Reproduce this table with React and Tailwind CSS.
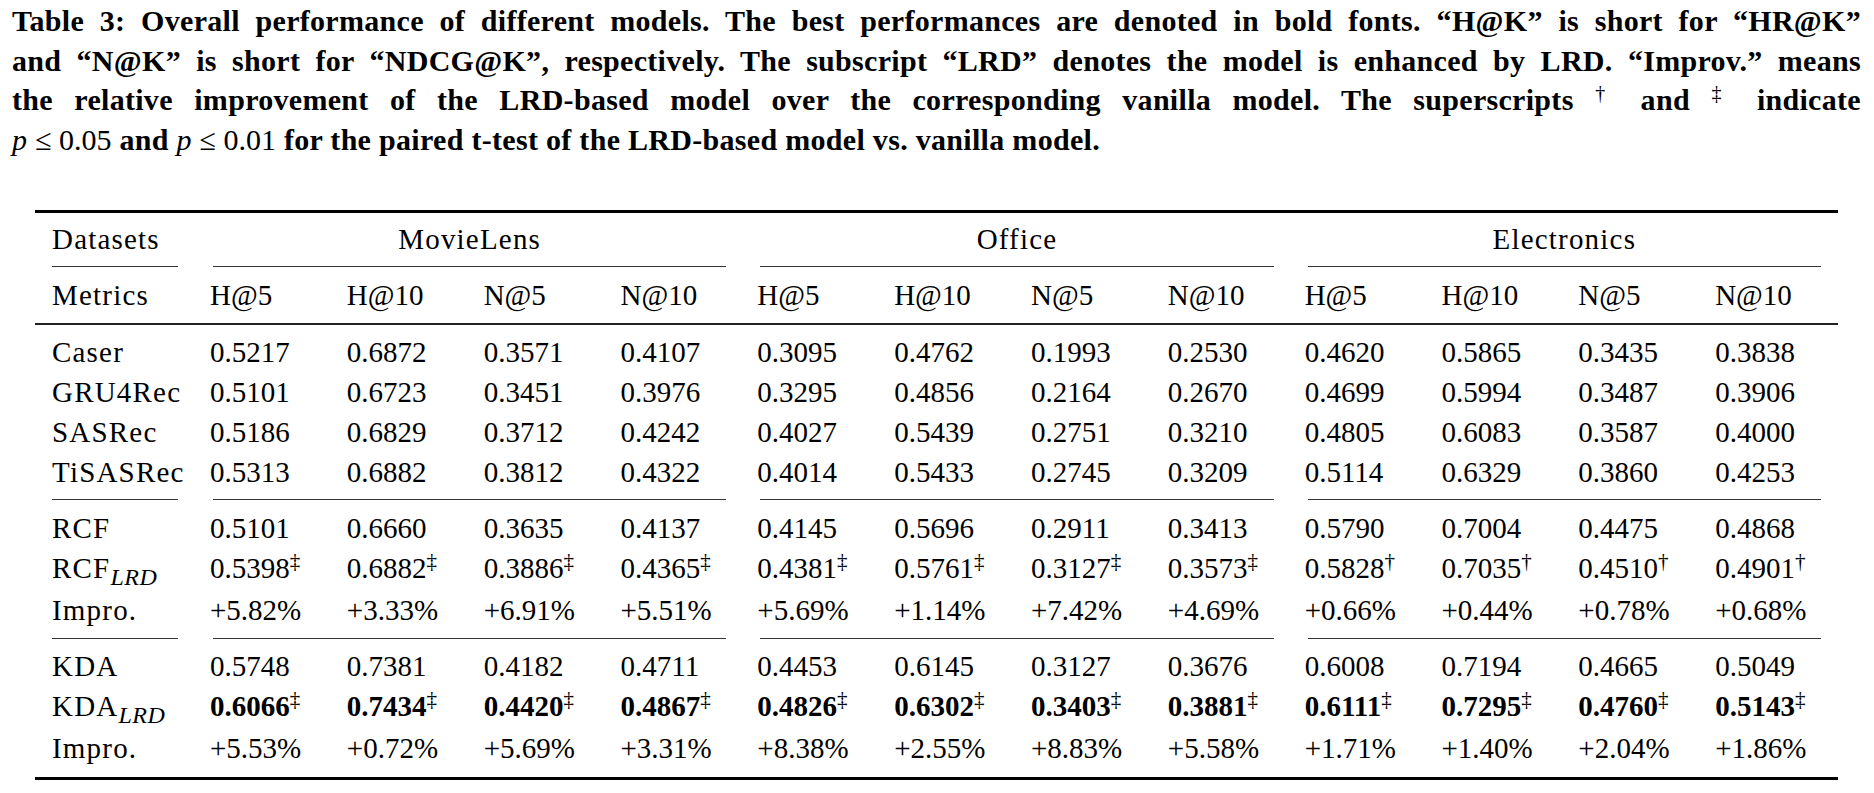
import React from "react";

const groups = ["MovieLens", "Office", "Electronics"];
const metrics = ["H@5", "H@10", "N@5", "N@10"];

// "‡" / "†" at the end of a value is drawn as a superscript
const block1 = [
  ["Caser", null, "0.5217 0.6872 0.3571 0.4107 0.3095 0.4762 0.1993 0.2530 0.4620 0.5865 0.3435 0.3838"],
  ["GRU4Rec", null, "0.5101 0.6723 0.3451 0.3976 0.3295 0.4856 0.2164 0.2670 0.4699 0.5994 0.3487 0.3906"],
  ["SASRec", null, "0.5186 0.6829 0.3712 0.4242 0.4027 0.5439 0.2751 0.3210 0.4805 0.6083 0.3587 0.4000"],
  ["TiSASRec", null, "0.5313 0.6882 0.3812 0.4322 0.4014 0.5433 0.2745 0.3209 0.5114 0.6329 0.3860 0.4253"],
];

const block2 = [
  ["RCF", null, "0.5101 0.6660 0.3635 0.4137 0.4145 0.5696 0.2911 0.3413 0.5790 0.7004 0.4475 0.4868"],
  ["RCF", "LRD", "0.5398‡ 0.6882‡ 0.3886‡ 0.4365‡ 0.4381‡ 0.5761‡ 0.3127‡ 0.3573‡ 0.5828† 0.7035† 0.4510† 0.4901†"],
  ["Impro.", null, "+5.82% +3.33% +6.91% +5.51% +5.69% +1.14% +7.42% +4.69% +0.66% +0.44% +0.78% +0.68%"],
];

const block3 = [
  ["KDA", null, "0.5748 0.7381 0.4182 0.4711 0.4453 0.6145 0.3127 0.3676 0.6008 0.7194 0.4665 0.5049"],
  ["KDA", "LRD", "0.6066‡ 0.7434‡ 0.4420‡ 0.4867‡ 0.4826‡ 0.6302‡ 0.3403‡ 0.3881‡ 0.6111‡ 0.7295‡ 0.4760‡ 0.5143‡", true],
  ["Impro.", null, "+5.53% +0.72% +5.69% +3.31% +8.38% +2.55% +8.83% +5.58% +1.71% +1.40% +2.04% +1.86%"],
];

const gridCols = "grid grid-cols-[161px_repeat(12,minmax(0,1fr))]";

function Cell({ value, bold }) {
  const mark = value.endsWith("‡") || value.endsWith("†") ? value.slice(-1) : null;
  const num = mark ? value.slice(0, -1) : value;
  return (
    <div className="pl-[14px] leading-[40px] whitespace-nowrap">
      <span className={bold ? "font-bold" : ""}>{num}</span>
      {mark && <sup className="text-[21px] font-normal">{mark}</sup>}
    </div>
  );
}

function Row({ label, sub, values, bold }) {
  return (
    <div className={`${gridCols} ${sub ? "h-[42px]" : "h-[40px]"}`}>
      <div className="pl-[17px] leading-[40px] whitespace-nowrap tracking-[1.2px]">
        {label}
        {sub && <sub className="text-[24px] italic tracking-[0.5px] -bottom-[7px]">{sub}</sub>}
      </div>
      {values.split(" ").map((v, i) => (
        <Cell key={i} value={v} bold={bold} />
      ))}
    </div>
  );
}

function CmidRule() {
  return (
    <div className={`${gridCols} h-px`}>
      <div className="ml-[17px] mr-[18px] bg-[#333]" />
      <div className="col-span-4 mx-[17px] bg-[#333]" />
      <div className="col-span-4 mx-[17px] bg-[#333]" />
      <div className="col-span-4 mx-[17px] bg-[#333]" />
    </div>
  );
}

function Block({ rows }) {
  return (
    <div>
      {rows.map(([label, sub, values, bold], i) => (
        <Row key={i} label={label} sub={sub} values={values} bold={bold} />
      ))}
    </div>
  );
}

export default function App() {
  return (
    <div className="w-[1874px] h-[793px] overflow-hidden bg-white text-black font-['Liberation_Serif',serif]">
      {/* caption */}
      <div className="ml-[12px] w-[1849px] pt-[1px] text-[30px] leading-[39.5px] font-bold tracking-[0.3px]">
        <p className="text-justify [text-align-last:justify]">
          Table 3: Overall performance of different models. The best performances are denoted in bold fonts. “H@K” is short for “HR@K”
        </p>
        <p className="text-justify [text-align-last:justify]">
          and “N@K” is short for “NDCG@K”, respectively. The subscript “LRD” denotes the model is enhanced by LRD. “Improv.” means
        </p>
        <p className="text-justify [text-align-last:justify]">
          the relative improvement of the LRD-based model over the corresponding vanilla model. The superscripts
          <sup className="ml-[8px] text-[20px] font-normal">†</sup> and
          <sup className="ml-[8px] text-[20px] font-normal">‡</sup> indicate
        </p>
        <p>
          <i className="font-normal">p</i> <span className="font-normal tracking-normal">≤ 0.05</span> and{" "}
          <i className="font-normal">p</i> <span className="font-normal tracking-normal">≤ 0.01</span> for the paired t-test of
          the LRD-based model vs. vanilla model.
        </p>
      </div>

      {/* table */}
      <div className="ml-[35px] mt-[51px] w-[1803px] text-[29px]">
        <div className="h-[3px] bg-black" />

        <div className={`${gridCols} mt-[6px] h-[40px] leading-[40px] tracking-[1.2px]`}>
          <div className="pl-[17px]">Datasets</div>
          {groups.map((g) => (
            <div key={g} className="col-span-4 text-center">
              {g}
            </div>
          ))}
        </div>

        <div className="mt-[7px]">
          <CmidRule />
        </div>

        <div className={`${gridCols} mt-[8px] h-[40px] leading-[40px]`}>
          <div className="pl-[17px] tracking-[1.2px]">Metrics</div>
          {groups.map((g) =>
            metrics.map((m) => (
              <div key={g + m} className="pl-[14px]">
                {m}
              </div>
            ))
          )}
        </div>

        <div className="mt-[8px] h-[2px] bg-[#222]" />

        <div className="mt-[7px]">
          <Block rows={block1} />
        </div>

        <div className="mt-[7px]">
          <CmidRule />
        </div>

        <div className="mt-[8px]">
          <Block rows={block2} />
        </div>

        <div className="mt-[8px]">
          <CmidRule />
        </div>

        <div className="mt-[7px]">
          <Block rows={block3} />
        </div>

        <div className="mt-[9px] h-[3px] bg-black" />
      </div>
    </div>
  );
}
